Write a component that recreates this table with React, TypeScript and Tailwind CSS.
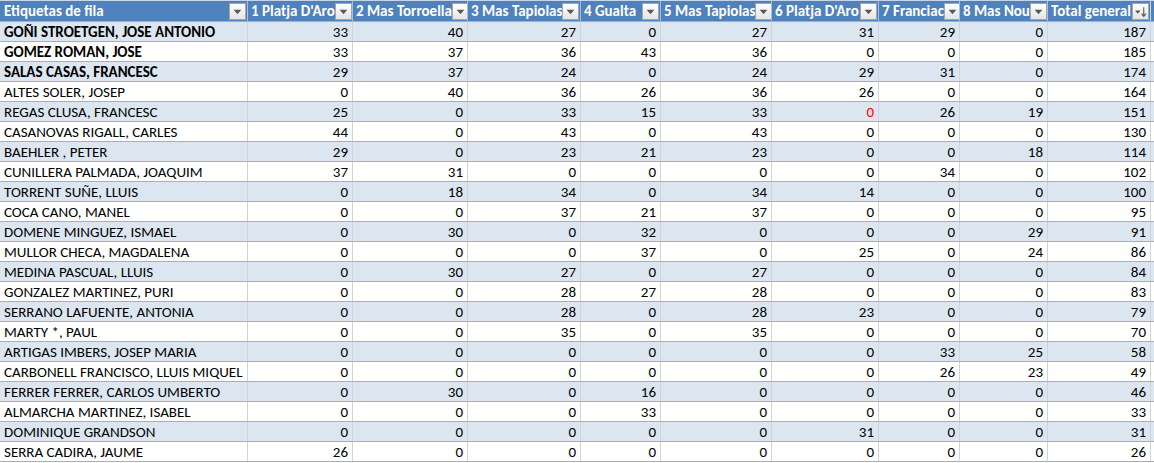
import React from "react";

const columns = [
  "1 Platja D'Aro",
  "2 Mas Torroella",
  "3 Mas Tapiolas",
  "4 Gualta",
  "5 Mas Tapiolas",
  "6 Platja D'Aro",
  "7 Franciac",
  "8 Mas Nou",
];

type Row = { name: string; bold?: boolean; values: number[]; total: number; red?: number };

const rows: Row[] = [
  { name: "GOÑI STROETGEN, JOSE ANTONIO", bold: true, values: [33, 40, 27, 0, 27, 31, 29, 0], total: 187 },
  { name: "GOMEZ ROMAN, JOSE", bold: true, values: [33, 37, 36, 43, 36, 0, 0, 0], total: 185 },
  { name: "SALAS CASAS, FRANCESC", bold: true, values: [29, 37, 24, 0, 24, 29, 31, 0], total: 174 },
  { name: "ALTES SOLER, JOSEP", values: [0, 40, 36, 26, 36, 26, 0, 0], total: 164 },
  { name: "REGAS CLUSA, FRANCESC", values: [25, 0, 33, 15, 33, 0, 26, 19], total: 151, red: 5 },
  { name: "CASANOVAS RIGALL, CARLES", values: [44, 0, 43, 0, 43, 0, 0, 0], total: 130 },
  { name: "BAEHLER , PETER", values: [29, 0, 23, 21, 23, 0, 0, 18], total: 114 },
  { name: "CUNILLERA PALMADA, JOAQUIM", values: [37, 31, 0, 0, 0, 0, 34, 0], total: 102 },
  { name: "TORRENT SUÑE, LLUIS", values: [0, 18, 34, 0, 34, 14, 0, 0], total: 100 },
  { name: "COCA CANO, MANEL", values: [0, 0, 37, 21, 37, 0, 0, 0], total: 95 },
  { name: "DOMENE MINGUEZ, ISMAEL", values: [0, 30, 0, 32, 0, 0, 0, 29], total: 91 },
  { name: "MULLOR CHECA, MAGDALENA", values: [0, 0, 0, 37, 0, 25, 0, 24], total: 86 },
  { name: "MEDINA PASCUAL, LLUIS", values: [0, 30, 27, 0, 27, 0, 0, 0], total: 84 },
  { name: "GONZALEZ MARTINEZ, PURI", values: [0, 0, 28, 27, 28, 0, 0, 0], total: 83 },
  { name: "SERRANO LAFUENTE, ANTONIA", values: [0, 0, 28, 0, 28, 23, 0, 0], total: 79 },
  { name: "MARTY *, PAUL", values: [0, 0, 35, 0, 35, 0, 0, 0], total: 70 },
  { name: "ARTIGAS IMBERS, JOSEP MARIA", values: [0, 0, 0, 0, 0, 0, 33, 25], total: 58 },
  { name: "CARBONELL FRANCISCO, LLUIS MIQUEL", values: [0, 0, 0, 0, 0, 0, 26, 23], total: 49 },
  { name: "FERRER FERRER, CARLOS UMBERTO", values: [0, 30, 0, 16, 0, 0, 0, 0], total: 46 },
  { name: "ALMARCHA MARTINEZ, ISABEL", values: [0, 0, 0, 33, 0, 0, 0, 0], total: 33 },
  { name: "DOMINIQUE GRANDSON", values: [0, 0, 0, 0, 0, 31, 0, 0], total: 31 },
  { name: "SERRA CADIRA, JAUME", values: [26, 0, 0, 0, 0, 0, 0, 0], total: 26 },
];

const grid = "grid grid-cols-[248px_105px_115px_113px_80px_111px_107px_81px_88px_103px]";

function FilterButton({ sort }: { sort?: boolean }) {
  return (
    <span className="flex h-[17px] w-[17px] shrink-0 items-center justify-center border border-[#a6a6a6] bg-gradient-to-b from-[#ffffff] to-[#e4e4e4]">
      {sort ? (
        <svg width="13" height="13" viewBox="0 0 12 12">
          <path d="M1 5h5l-2.5 3z" fill="#555" />
          <path d="M9 2v8M7 8l2 2.5 2-2.5" stroke="#555" strokeWidth="1" fill="none" />
        </svg>
      ) : (
        <svg width="11" height="11" viewBox="0 0 10 10">
          <path d="M1.5 3.5h7L5 7.5z" fill="#595959" />
        </svg>
      )}
    </span>
  );
}

export default function App() {
  return (
    <div className="h-[463px] w-[1154px] overflow-hidden bg-white font-['Calibri','Lato','Open_Sans',sans-serif] text-[15px] leading-none text-black">
      <div className={`${grid} h-[22px] border-t border-b border-t-[#c5d6eb] border-b-[#95b3d7] bg-[#4f81bd] font-bold text-white`}>
        <div className="flex items-center justify-between border-r border-[#a7c0de] pl-[4px] pr-[1px]">
          <span>Etiquetas de fila</span>
          <FilterButton />
        </div>
        {columns.map((c) => (
          <div key={c} className="flex items-center justify-between overflow-hidden border-r border-[#a7c0de] pl-[3px] pr-[1px]">
            <span className="whitespace-nowrap">{c}</span>
            <FilterButton />
          </div>
        ))}
        <div className="flex items-center justify-between border-r border-[#d4d4d4] pl-[3px] pr-[1px]">
          <span className="whitespace-nowrap">Total general</span>
          <FilterButton sort />
        </div>
      </div>
      {rows.map((r, i) => (
        <div
          key={r.name}
          className={`${grid} h-[20px] border-b border-[#95b3d7] ${i % 2 === 0 ? "bg-[#dce6f1]" : "bg-white"} ${r.bold ? "font-bold" : ""}`}
        >
          <div className="flex items-center whitespace-nowrap border-r border-[#d4d4d4] pl-[4px] pt-[2px]">{r.name}</div>
          {r.values.map((v, j) => (
            <div
              key={j}
              className={`flex items-center justify-end border-r border-[#d4d4d4] pr-[4px] pt-[2px] font-normal ${r.red === j ? "text-[#ff0000]" : ""}`}
            >
              {v}
            </div>
          ))}
          <div className="flex items-center justify-end border-r border-[#d4d4d4] pr-[4px] pt-[2px] font-normal">{r.total}</div>
        </div>
      ))}
    </div>
  );
}
